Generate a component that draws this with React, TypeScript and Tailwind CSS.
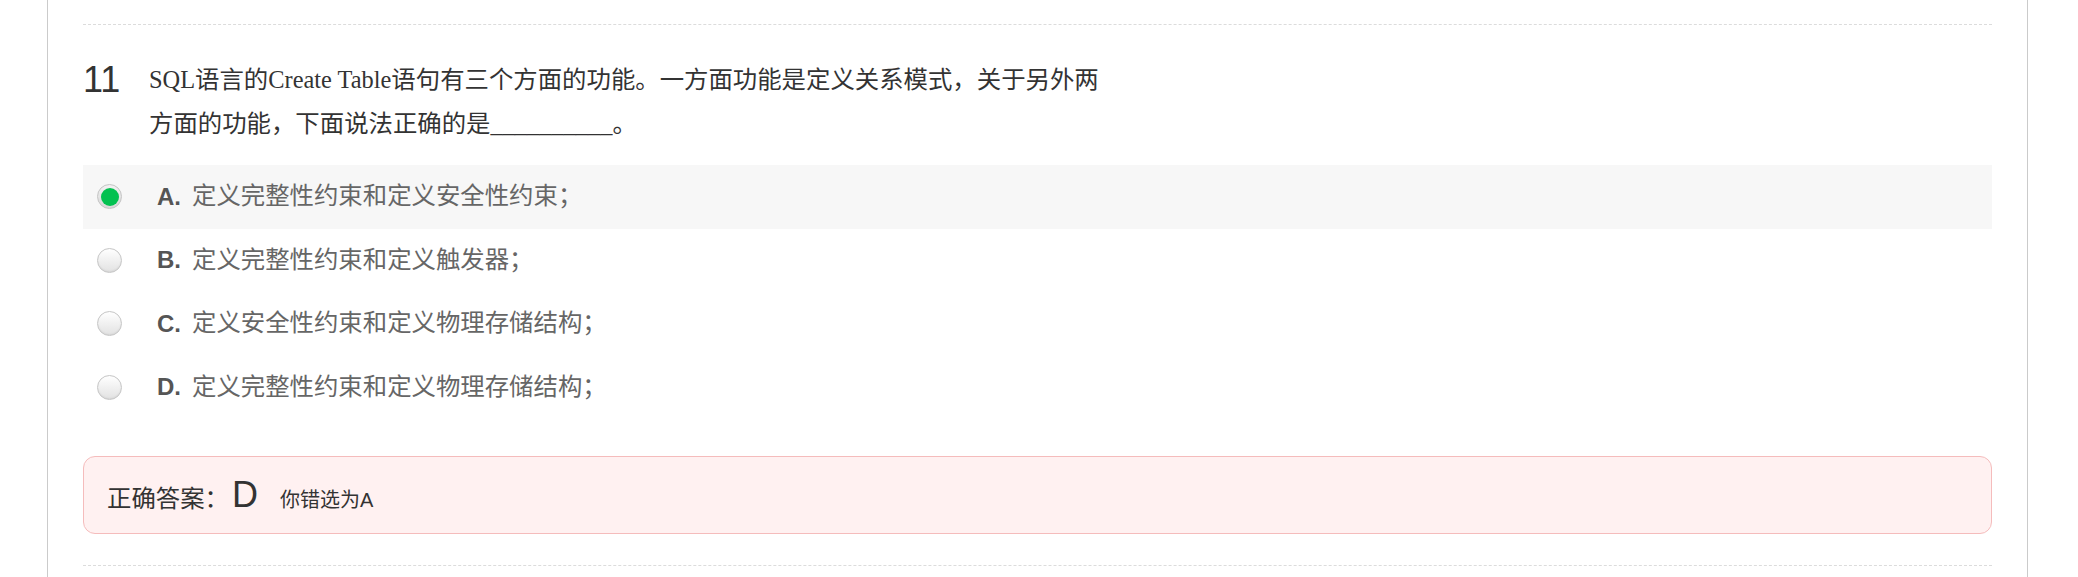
const options = [
  { key: 'A', text: '定义完整性约束和定义安全性约束；', picked: true },
  { key: 'B', text: '定义完整性约束和定义触发器；', picked: false },
  { key: 'C', text: '定义安全性约束和定义物理存储结构；', picked: false },
  { key: 'D', text: '定义完整性约束和定义物理存储结构；', picked: false },
];

function Radio({ checked }: { checked: boolean }) {
  if (checked) {
    return (
      <span className="flex h-[25px] w-[25px] shrink-0 items-center justify-center rounded-full border border-[#c4c4c4] bg-linear-to-b from-[#f2f2f2] to-[#d8d8d8]">
        <span className="h-[18px] w-[18px] rounded-full bg-[#03c150]" />
      </span>
    );
  }
  return (
    <span className="h-[25px] w-[25px] shrink-0 rounded-full border border-[#c6c6c6] bg-linear-to-b from-[#ffffff] to-[#e2e2e2] shadow-[inset_0_-1px_2px_rgba(0,0,0,0.06)]" />
  );
}

export default function App() {
  return (
    <div className="h-[577px] w-full overflow-hidden bg-white">
      <div className="ml-[47px] h-full w-[1981px] border-x border-[#cbcbcb] px-[35px] pt-[24px]">
        <div className="border-t border-dashed border-[#dcdcdc]" />

        <div className="mt-[33px] flex items-start">
          <div className="w-[66px] shrink-0 font-['Liberation_Sans',Arial,sans-serif] text-[36px] leading-[44px] text-[#333]">
            11
          </div>
          <p className="max-w-[966px] font-['Liberation_Serif','Noto_Sans_CJK_SC',serif] text-[24.4px] leading-[44px] text-[#333]">
            SQL语言的Create Table语句有三个方面的功能。一方面功能是定义关系模式，关于另外两方面的功能，下面说法正确的是__________。
          </p>
        </div>

        <div className="mt-[19px] flex flex-col">
          {options.map((o) => (
            <div
              key={o.key}
              className={`flex h-[63.5px] items-center pl-[14px] ${o.picked ? 'bg-[#f7f7f7]' : ''}`}
            >
              <Radio checked={o.picked} />
              <span className="ml-[35px] font-['Liberation_Sans',Arial,sans-serif] text-[24px] font-bold text-[#555]">
                {o.key}.
              </span>
              <span className="ml-[11px] font-['Liberation_Serif','Noto_Sans_CJK_SC',serif] text-[24.4px] text-[#666]">
                {o.text}
              </span>
            </div>
          ))}
        </div>

        <div className="mt-[37px] flex h-[78px] items-center rounded-[12px] border border-[#f5bcbc] bg-[#fff1f1] pl-[23px]">
          <div className="flex items-baseline font-['Liberation_Sans','Noto_Sans_CJK_SC',sans-serif] text-[#333]">
            <span className="text-[24.4px]">正确答案：</span>
            <span className="ml-[3px] text-[36px]">D</span>
            <span className="ml-[22px] text-[20px]">你错选为A</span>
          </div>
        </div>

        <div className="mt-[31px] border-t border-dashed border-[#dcdcdc]" />
      </div>
    </div>
  );
}
